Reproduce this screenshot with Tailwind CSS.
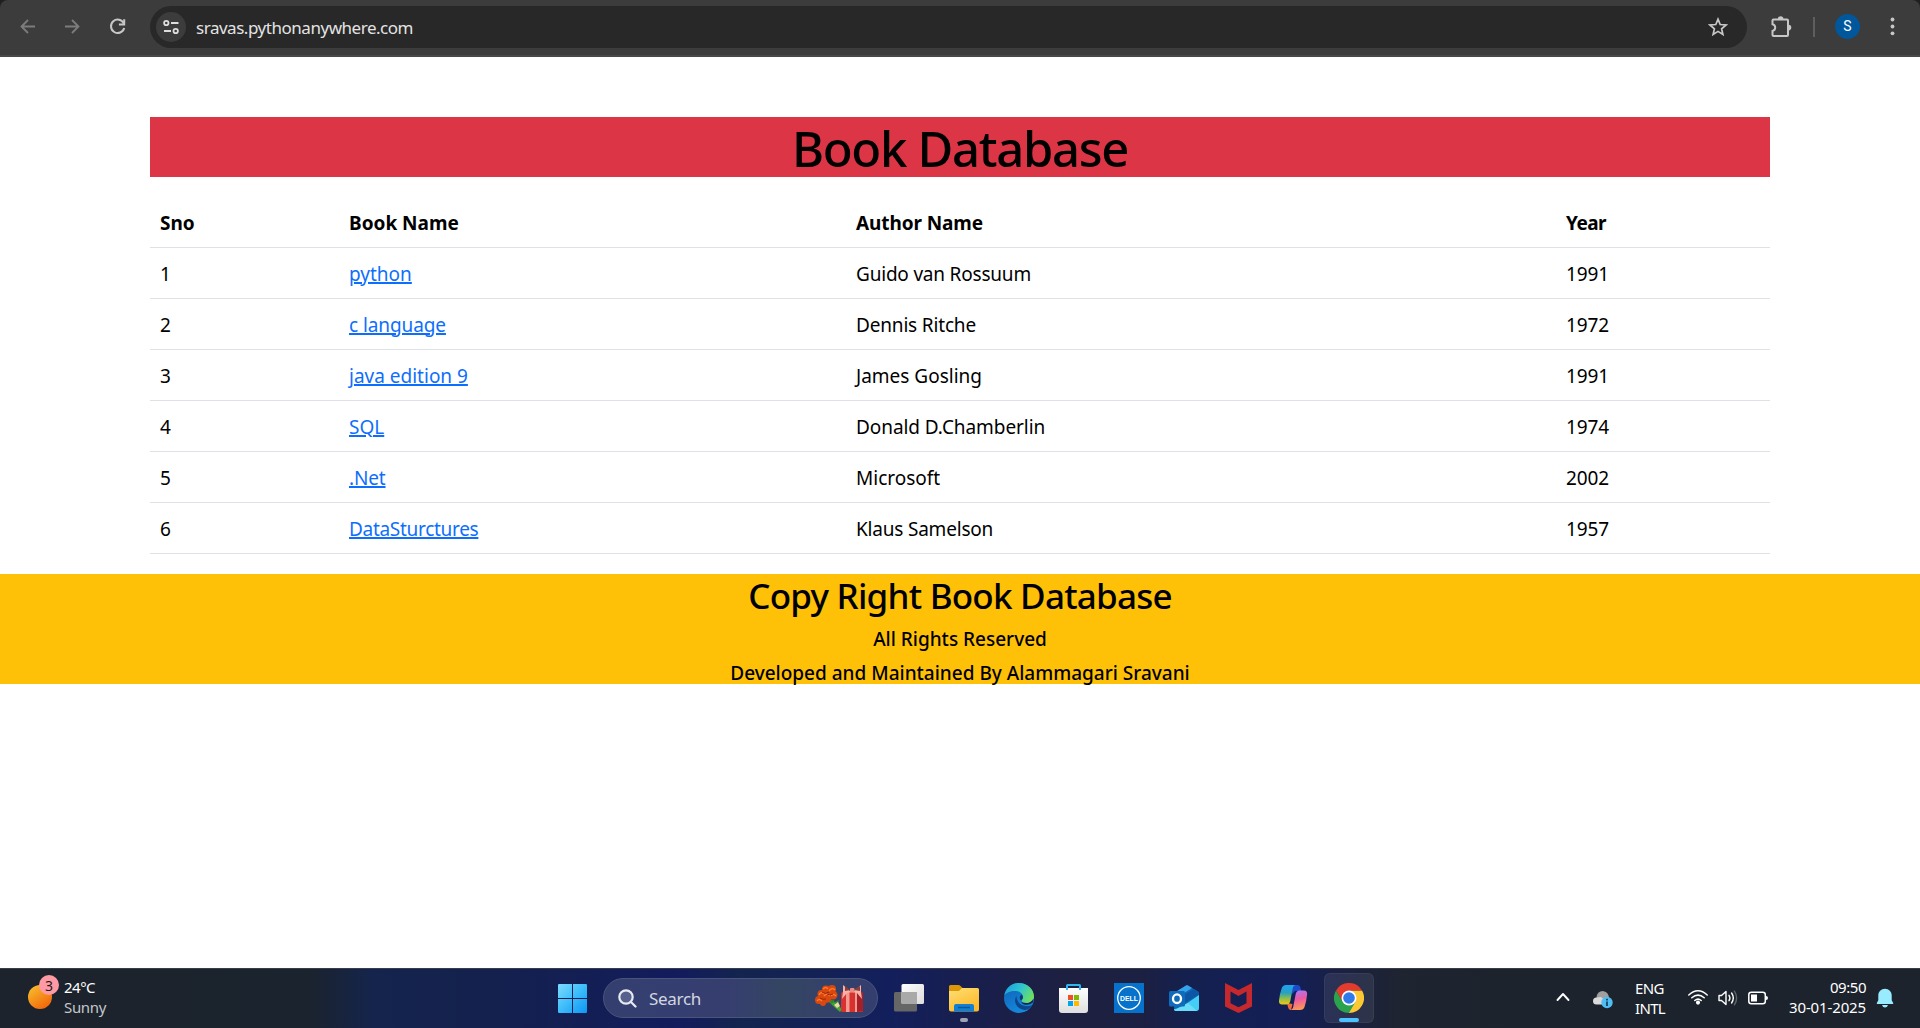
<!DOCTYPE html>
<html lang="en">
<head>
<meta charset="utf-8">
<title>Book Database</title>
<script src="https://cdn.jsdelivr.net/npm/@tailwindcss/browser@4"></script>
</head>
<body class="flex h-[1028px] w-[1920px] flex-col overflow-hidden bg-white font-['Noto_Sans','Open_Sans',sans-serif] text-black">

<!-- Browser toolbar -->
<div class="h-[57px] shrink-0 bg-[#1f1f1f]">
<header class="flex h-[57px] items-start rounded-t-lg border-b-2 border-[#484848] bg-[#3c3c3c]">
  <svg class="mt-[17px] ml-[18px] h-5 w-5 shrink-0" viewBox="0 0 20 20" fill="none" stroke="#7c7c7c" stroke-width="1.8"><path d="M17 9.5H3.5M10 3 3.5 9.5 10 16"/></svg>
  <svg class="mt-[17px] ml-[24px] h-5 w-5 shrink-0" viewBox="0 0 20 20" fill="none" stroke="#7c7c7c" stroke-width="1.8"><path d="M3 9.5h13.500M10 3l6.500 6.500L10 16"/></svg>
  <svg class="mt-[17px] ml-[26px] h-5 w-5 shrink-0" viewBox="0 0 20 20" fill="none" stroke="#c7c7c7" stroke-width="2"><path d="M15.800 6.500A6.700 6.700 0 1 0 16.200 11"/><path d="M16.200 2.200v5.300h-5.300"/></svg>
  <div class="mt-[6px] ml-[22px] flex h-[42px] w-[1597px] shrink-0 items-center rounded-full bg-[#282828] pl-[6px]">
    <span class="flex h-[30px] w-[30px] items-center justify-center rounded-full bg-[#3c3c3c]">
      <svg class="h-[18px] w-[18px]" viewBox="0 0 18 18" fill="none" stroke="#dedede" stroke-width="1.800"><circle cx="4.300" cy="5" r="2.200"/><path d="M9 5h7.500M2 13h7"/><circle cx="13.700" cy="13" r="2.200"/></svg>
    </span>
    <span class="ml-[10px] grow pt-[2px] text-[17px] leading-[26px] tracking-[-0.47px] text-[#e3e3e3]">sravas.pythonanywhere.com</span>
    <svg class="mr-[19px] h-5 w-5" viewBox="0 0 20 20" fill="none" stroke="#c7c7c7" stroke-width="1.700"><path d="m10 2.200 2.200 5.300 5.800.5-4.400 3.800 1.300 5.600-4.900-3-4.900 3 1.300-5.600L2 8l5.800-.5z"/></svg>
  </div>
  <svg class="mt-[15px] ml-[22px] h-[23px] w-[23px] shrink-0" viewBox="0 0 23 23"><path d="M4.500 4.500h13.500q1 0 1 1v14.500q0 1-1 1H4.500q-1 0-1-1V16c3.600-.8 3.600-6 0-6.800V5.500q0-1 1-1z" fill="none" stroke="#c7c7c7" stroke-width="2"/><path d="M8.800 4a2.800 2.800 0 0 1 5.600 0zM19.500 9.800a2.800 2.800 0 0 1 0 5.600z" fill="#c7c7c7"/></svg>
  <span class="mt-[17px] ml-[21px] h-5 w-[2px] shrink-0 bg-[#5e5e5e]"></span>
  <span class="mt-[14px] ml-[20px] flex h-[25px] w-[25px] shrink-0 items-center justify-center rounded-full bg-[#00579c] font-[Roboto,sans-serif] text-[14px] text-white">S</span>
  <svg class="mt-[16px] ml-[27px] h-5 w-[10px] shrink-0" viewBox="0 0 10 20" fill="#c7c7c7"><circle cx="5.500" cy="3.500" r="1.900"/><circle cx="5.500" cy="10.500" r="1.900"/><circle cx="5.500" cy="17.300" r="1.900"/></svg>
</header>
</div>

<!-- Page -->
<main class="grow">
  <div class="mx-[150px] pt-[60px]">
    <h1 class="h-[60px] bg-[#dc3545] pt-[2px] text-center text-[49px] leading-[59px] font-medium tracking-[-1.31px]">Book Database</h1>
    <table class="mt-[19px] w-full table-fixed border-collapse text-left text-[19px] leading-[47px]">
      <colgroup><col class="w-[189px]"><col class="w-[507px]"><col class="w-[710px]"><col></colgroup>
      <thead>
        <tr class="h-[51px] border-b border-[#dee2e6] leading-[45px]">
          <th class="p-0 pt-[5px] pl-[10px]">Sno</th><th class="p-0 pt-[5px] pl-[10px]">Book Name</th><th class="p-0 pt-[5px] pl-[10px] tracking-[-0.1px]">Author Name</th><th class="p-0 pt-[5px] pl-[10px] tracking-[-0.54px]">Year</th>
        </tr>
      </thead>
      <tbody>
        <tr class="h-[51px] border-b border-[#dee2e6]"><td class="p-0 pt-[3px] pl-[10px]">1</td><td class="p-0 pt-[3px] pl-[10px]"><a class="text-[#0d6efd] underline decoration-2 underline-offset-1">python</a></td><td class="p-0 pt-[3px] pl-[10px] tracking-[-0.2px]">Guido van Rossuum</td><td class="p-0 pt-[3px] pl-[10px] tracking-[-0.1px]">1991</td></tr>
        <tr class="h-[51px] border-b border-[#dee2e6]"><td class="p-0 pt-[3px] pl-[10px]">2</td><td class="p-0 pt-[3px] pl-[10px]"><a class="tracking-[-0.09px] text-[#0d6efd] underline decoration-2 underline-offset-1">c language</a></td><td class="p-0 pt-[3px] pl-[10px] tracking-[-0.17px]">Dennis Ritche</td><td class="p-0 pt-[3px] pl-[10px] tracking-[-0.1px]">1972</td></tr>
        <tr class="h-[51px] border-b border-[#dee2e6]"><td class="p-0 pt-[3px] pl-[10px]">3</td><td class="p-0 pt-[3px] pl-[10px]"><a class="text-[#0d6efd] underline decoration-2 underline-offset-1">java edition 9</a></td><td class="p-0 pt-[3px] pl-[10px]">James Gosling</td><td class="p-0 pt-[3px] pl-[10px] tracking-[-0.1px]">1991</td></tr>
        <tr class="h-[51px] border-b border-[#dee2e6]"><td class="p-0 pt-[3px] pl-[10px]">4</td><td class="p-0 pt-[3px] pl-[10px]"><a class="text-[#0d6efd] underline decoration-2 underline-offset-1">SQL</a></td><td class="p-0 pt-[3px] pl-[10px] tracking-[-0.07px]">Donald D.Chamberlin</td><td class="p-0 pt-[3px] pl-[10px] tracking-[-0.1px]">1974</td></tr>
        <tr class="h-[51px] border-b border-[#dee2e6]"><td class="p-0 pt-[3px] pl-[10px]">5</td><td class="p-0 pt-[3px] pl-[10px]"><a class="tracking-[-0.15px] text-[#0d6efd] underline decoration-2 underline-offset-1">.Net</a></td><td class="p-0 pt-[3px] pl-[10px]">Microsoft</td><td class="p-0 pt-[3px] pl-[10px] tracking-[-0.1px]">2002</td></tr>
        <tr class="h-[51px] border-b border-[#dee2e6]"><td class="p-0 pt-[3px] pl-[10px]">6</td><td class="p-0 pt-[3px] pl-[10px]"><a class="tracking-[-0.3px] text-[#0d6efd] underline decoration-2 underline-offset-1">DataSturctures</a></td><td class="p-0 pt-[3px] pl-[10px] tracking-[-0.2px]">Klaus Samelson</td><td class="p-0 pt-[3px] pl-[10px] tracking-[-0.1px]">1957</td></tr>
      </tbody>
    </table>
  </div>
  <footer class="mt-5 h-[110px] bg-[#ffc107] text-center font-medium">
    <h2 class="text-[35px] leading-[43px] tracking-[-0.77px]">Copy Right Book Database</h2>
    <h6 class="mt-[10px] text-[19px] leading-6">All Rights Reserved</h6>
    <h6 class="mt-[10px] text-[19px] leading-6">Developed and Maintained By Alammagari Sravani</h6>
  </footer>
</main>

<!-- Taskbar -->
<nav class="flex h-[60px] shrink-0 items-start border-t border-[#383d4c] bg-[linear-gradient(90deg,#1c232c_0px,#1b232e_310px,#14244d_375px,#14204e_500px,#131c5c_680px,#13244f_740px,#131f5c_890px,#191f4c_980px,#1d2040_1070px,#1c2042_1140px,#14204f_1190px,#131f56_1290px,#1b2140_1350px,#1e2430_1400px,#1c232c_1540px)] text-white">
  <div class="relative ml-[28px] flex w-[530px] shrink-0 pt-[8px]">
    <svg class="mt-[8px] h-6 w-6" viewBox="0 0 24 24"><defs><linearGradient id="sun" x1="0" y1="0" x2=".7" y2="1"><stop stop-color="#f8c530"/><stop offset="1" stop-color="#f2660b"/></linearGradient></defs><circle cx="12" cy="12" r="12" fill="url(#sun)"/></svg>
    <span class="absolute top-[6px] left-[11px] flex h-5 w-5 items-center justify-center rounded-full bg-[#ff99a4] text-[14px] text-[#1b1b1b]">3</span>
    <div class="ml-[12px] text-[15px] leading-5"><p class="tracking-[-0.5px]">24°C</p><p class="tracking-[-0.34px] text-[#c4c7ca]">Sunny</p></div>
  </div>

  <svg class="mt-[15px] h-[29px] w-[29px] shrink-0" viewBox="0 0 29 29"><defs><linearGradient id="win" x1="0" y1="0" x2="1" y2="1"><stop stop-color="#7ddcff"/><stop offset=".5" stop-color="#3cbcfa"/><stop offset="1" stop-color="#0d96f5"/></linearGradient></defs><path fill="url(#win)" d="M1 0h13v14H0V1q0-1 1-1zM15 0h13q1 0 1 1v13H15zM0 15h14v14H1q-1 0-1-1zM15 15h14v13q0 1-1 1H15z"/></svg>

  <div class="mt-[9px] ml-[16px] flex h-10 w-[275px] shrink-0 items-center rounded-full border border-[#4b5579] bg-[linear-gradient(90deg,#343f70,#363e70_45%,#344562_65%,#343e70)] pl-[14px]">
    <svg class="h-[19px] w-[19px]" viewBox="0 0 19 19" fill="none" stroke="#e8eaf2" stroke-width="2.200" stroke-linecap="round"><circle cx="8" cy="8" r="6.700" fill="#55618c"/><path d="m13 13 4.500 4.500"/></svg>
    <span class="ml-[12px] grow pt-[2px] text-[17px] leading-6 tracking-[-0.3px] text-[#d3d6e0]">Search</span>
    <svg class="mr-[13px] h-[29px] w-[50px]" viewBox="0 0 50 29">
      <path d="M17 16q6 3 11 9l-2 3q-6-5-11-10z" fill="#43a833"/><path d="m17 20 8-4-1 5zM14 17l8 6-2-7z" fill="#2c8b2f"/><path d="m20 21 4-3 2 4-3 2z" fill="#ead9a4"/>
      <g fill="#d9480f"><circle cx="12" cy="5.500" r="4"/><circle cx="18" cy="5" r="4"/><circle cx="7.500" cy="10" r="4"/><circle cx="19" cy="11" r="4.500"/><circle cx="12.500" cy="14" r="5"/><circle cx="5" cy="16" r="4"/><circle cx="9" cy="19" r="3"/></g>
      <g fill="none" stroke="#ff7a2f" stroke-width="1.300"><path d="M9 5q3-3 5 0M15 7q3-4 6-1M5 11q2-4 5-1M10 12q3-4 6 0M3 17q2-3 5 0M17 12q2-3 5 0"/></g>
      <g fill="none" stroke="#9c2408"><path d="M8 8q3 3 7 0M13 10q3 2 6 0M6 14q3 2 6 1"/></g>
      <rect x="27" y="8" width="22" height="20" rx="1.500" fill="#d7322f"/><path d="M43 8h6v19l-6 1z" fill="#a91f28"/><path d="M32 8h3.500v20H32zM41 8h2v20h-2z" fill="#f59a90"/>
      <path d="M36 7 29 1v7l-1 7 5-6 5-1 5 1 5 6-1-7V1l-7 6z" fill="#f7b2a6"/><path d="m36 6-5-4v5zM40 6l6-4v5z" fill="#8d3b35"/><rect x="36" y="4" width="4.500" height="4.500" rx="1" fill="#e88d82"/>
    </svg>
  </div>

  <div class="ml-[16px] flex shrink-0 gap-[25px] pt-[14px]">
    <!-- Task view -->
    <svg class="h-[30px] w-[30px]" viewBox="0 0 30 30"><defs><linearGradient id="tv" x1="0" y1="0" x2="1" y2="1"><stop stop-color="#fff"/><stop offset="1" stop-color="#dcdcdc"/></linearGradient></defs><rect y="9" width="23" height="19.500" rx="1.500" fill="#666"/><rect x="7.500" y="1" width="22.500" height="20" rx="1.500" fill="url(#tv)"/><path d="M7.500 9H23v12H9q-1.500 0-1.500-1.500z" fill="#a9a9a9"/></svg>
    <!-- File explorer -->
    <div class="relative"><svg class="h-[30px] w-[30px]" viewBox="0 0 30 30"><defs><linearGradient id="fd" x1="0" y1="0" x2=".6" y2="1"><stop stop-color="#ffdf74"/><stop offset="1" stop-color="#fcba2b"/></linearGradient></defs><path d="M0 8V3.500Q0 2 1.500 2h8q1 0 2 1L13.500 5H20v5H0z" fill="#dc9708"/><path d="M0 8h10l3-3h15.500Q30 5 30 6.500v20q0 2-2 2H2q-2 0-2-2z" fill="url(#fd)"/><path d="M5 28.500V23q0-2 2-2h16q2 0 2 2v5.500z" fill="#1180d4"/><path d="M9 24.500h12" stroke="#0a559b" stroke-width="1.500"/></svg>
      <span class="absolute top-[35px] left-[11px] h-1 w-2 rounded-full bg-[#9fa3b8]"></span></div>
    <!-- Edge -->
    <svg class="h-[30px] w-[30px]" viewBox="0 0 30 30"><defs><linearGradient id="e1" x1="0" y1=".2" x2="1" y2=".6"><stop stop-color="#1c9fe0"/><stop offset=".5" stop-color="#2fc4d0"/><stop offset="1" stop-color="#6fe05c"/></linearGradient><linearGradient id="e2" x1="0" y1="0" x2=".5" y2="1"><stop stop-color="#0f5fb5"/><stop offset="1" stop-color="#1489dc"/></linearGradient></defs><circle cx="15" cy="15" r="15" fill="url(#e2)"/><path d="M.3 12.500C1.600 5 7.500 0 15 0c9 0 15 6.500 15 13.500 0 4-3 6.500-7 6.500-3.500 0-5.500-1.200-5.500-2.400 0-.8 1.500-1.400 1.500-3.600C19 10.500 15.500 8 11 8 6 8 2 10 .3 12.500z" fill="url(#e1)"/><path d="M12.500 13C9 18 12 26 20.500 27c3 .3 6-2 7.800-5.200-3 1.700-6 2-9 .8-4.500-1.600-6.800-5.600-6.800-9.600z" fill="#0d4689"/><path d="M29 19.500q-3.500 3-8 2.200-3-.6-4-3.200 2 1.800 6 1.500 4-.2 6.500-4.500z" fill="#17265a"/><path d="M19 14c0 2-1.500 2.800-1.500 3.600-1.800-.5-2.500-3.500-.3-6.100q1.800 1 1.800 2.500z" fill="#15376b"/></svg>
    <!-- Store -->
    <svg class="h-[30px] w-[30px]" viewBox="0 0 30 30"><defs><linearGradient id="st" x1="0" y1="0" x2="0" y2="1"><stop stop-color="#fff"/><stop offset="1" stop-color="#dedede"/></linearGradient></defs><path d="M0 5h29v22q0 3-3 3H3q-3 0-3-3z" fill="url(#st)"/><path d="M8 7V2.500Q8 2 8.500 2h12q.5 0 .5.500V7" fill="none" stroke="#2fb6ea" stroke-width="2"/><path fill="#f25022" d="M9 12h5v5H9z"/><path fill="#7fba00" d="M15 12h5v5h-5z"/><path fill="#00a4ef" d="M9 18h5v5H9z"/><path fill="#ffb900" d="M15 18h5v5h-5z"/></svg>
    <!-- Dell -->
    <svg class="h-[30px] w-[30px]" viewBox="0 0 30 30"><path fill="#0672cb" d="M0 0h30v30H0z"/><circle cx="15" cy="15" r="11.300" fill="none" stroke="#fff" stroke-width="1.300"/><text x="15" y="18" text-anchor="middle" textLength="18" lengthAdjust="spacingAndGlyphs" font-family="Liberation Sans, sans-serif" font-weight="700" font-size="8" fill="#fff">DELL</text></svg>
    <!-- Outlook -->
    <svg class="h-[30px] w-[30px]" viewBox="0 0 30 30"><path d="m5 10 12-7.500q1-.5 2 0l10 6q1 .7 1 2V25q0 3-3 3H8q-3 0-3-3z" fill="#1267b4"/><path d="m5 10 12-7.500q1-.5 2 0l4 2.600L9 14H5z" fill="#35a3ea"/><path d="m10 15 15-9 4 2.500q1 .7 1 2v1L14 21z" fill="#0b56a5"/><path d="M30 12v13q0 3-3 3H8q-3 0-3-2 8 0 12-5z" fill="#44cdf5"/><path d="m5 27 14-7 9 7.800q-.5.2-1 .2H8q-2 0-3-1z" fill="#68dcf8"/><rect y="8" width="16" height="15.500" rx="1.500" fill="#0f6cbd"/><ellipse cx="8" cy="15.700" rx="4" ry="4.300" fill="none" stroke="#fff" stroke-width="2.300"/></svg>
    <!-- McAfee -->
    <svg class="h-[30px] w-[30px]" viewBox="0 0 30 30"><path d="m1 0 13.500 7L28 0v23.500L14.500 30 1 23.500zM6.500 8.500v11.800l8 4 8-4V8.500l-8 4.500z" fill="#c5282d" fill-rule="evenodd"/></svg>
    <!-- Copilot -->
    <svg class="h-[30px] w-[30px]" viewBox="0 0 30 30"><defs><linearGradient id="c1" x1="0" y1="0" x2="0" y2="1"><stop stop-color="#1ba5f5"/><stop offset=".4" stop-color="#2a9fc0"/><stop offset=".7" stop-color="#8fc04a"/><stop offset="1" stop-color="#f2c811"/></linearGradient><linearGradient id="c2" x1=".3" y1="0" x2=".5" y2="1"><stop stop-color="#a87bf5"/><stop offset=".45" stop-color="#ea58a6"/><stop offset="1" stop-color="#ff9a52"/></linearGradient></defs><path d="M12 2h6.500q2.500 0 3 3l.8 3H16l-3 3z" fill="#1a4bc9"/><path d="m8 20 5.500 1-1.500 6q-2.500 0-3-3z" fill="#f06a3c"/><path d="M7 2h10q-2.500 0-3.200 3l-2.500 13q-.8 3.500-4 3.500H3Q-.3 21.500 0 17.500.6 11 2.800 5 4 2 7 2z" fill="url(#c1)"/><path d="M20.500 7.500h4.500q3.400 0 3.100 4-.5 6-2.600 12.500-1 3-4.500 3H10.500q3 0 3.700-3l2.500-13q.8-3.500 3.800-3.500z" fill="url(#c2)"/></svg>
    <!-- Chrome -->
    <div class="relative"><span class="absolute -top-[10px] -left-[10px] h-[50px] w-[50px] rounded-md border border-white/5 bg-white/8"></span>
      <svg class="relative h-[30px] w-[30px]" viewBox="0 0 30 30"><path d="M15 15 15 30A15 15 0 0 0 28 7.500H15z" fill="#fcc934"/><path d="M15 7.500H28A15 15 0 0 0 2 7.500l6.500 11.200z" fill="#e33b2e"/><path d="M8.500 18.700 2 7.500A15 15 0 0 0 15 30l6.500-11.300z" fill="#2ba24c"/><circle cx="15" cy="15" r="7.500" fill="#fff"/><circle cx="15" cy="15" r="5.800" fill="#3079e8"/></svg>
      <span class="absolute top-[35px] left-[5px] h-1 w-5 rounded-full bg-[#4cc2ff]"></span></div>
  </div>

  <!-- System tray -->
  <svg class="mt-[22px] ml-[192px] h-3 w-[14px] shrink-0" viewBox="0 0 14 12" fill="none" stroke="#fff" stroke-width="1.900" stroke-linecap="round" stroke-linejoin="round"><path d="m1.500 9 5.500-6 5.500 6"/></svg>
  <svg class="mt-[21px] ml-[22px] h-[20px] w-[22px] shrink-0" viewBox="0 0 22 20"><circle cx="10.500" cy="7" r="6" fill="#8c8c8c"/><path d="M4.500 7.500q3.500-3 7 0l4 3v4H4.500a3.500 3.500 0 0 1 0-7z" fill="#dadada"/><path d="M10.500 1.500q6 0 6.500 6.500l-3 3-5-4-4 .5q.5-6 5.500-6z" fill="#a0a0a0"/><circle cx="15" cy="12.500" r="5.700" fill="#50bdf5"/><path d="M15 11.500V16M15 8.800v1.600" stroke="#12344a" stroke-width="1.600"/></svg>
  <div class="mt-[9px] ml-[21px] w-[53px] shrink-0 text-[15px] leading-5"><p class="tracking-[-0.56px]">ENG</p><p class="tracking-[-0.67px]">INTL</p></div>
  <svg class="mt-[20px] h-[16px] w-5 shrink-0" viewBox="0 0 20 16" fill="none" stroke="#fff" stroke-width="1.500" stroke-linecap="round"><path d="M.8 6q9.200-8.500 18.400 0M3.800 8.800q6.200-5.400 12.400 0M6.800 11.500q3.200-2.700 6.400 0"/><circle cx="10" cy="13.600" r="1.300" fill="#fff"/></svg>
  <svg class="mt-[20px] ml-[10px] h-[18px] w-5 shrink-0" viewBox="0 0 20 18" fill="none" stroke="#fff" stroke-width="1.400" stroke-linecap="round" stroke-linejoin="round"><path d="M1 6.500h2.500L8 2.500v13L3.500 11.500H1zM11 6.300q1.800 2.700 0 5.400M13.600 4q3.400 5 0 10"/><path d="M16.400 2.200q4.400 6.800 0 13.600" stroke="#60656d"/></svg>
  <svg class="mt-[22px] ml-[10px] h-[15px] w-5 shrink-0" viewBox="0 0 20 15"><rect x=".8" y="1.300" width="16.500" height="11.500" rx="2.500" fill="none" stroke="#fff" stroke-width="1.500"/><path d="M3 3.500h6v7H3zM18 5q2 0 2 2t-2 2z" fill="#fff"/></svg>
  <div class="mt-[8px] w-[98px] shrink-0 text-right text-[15px] leading-5"><p class="tracking-[-0.47px]">09:50</p><p class="tracking-[-0.13px]">30-01-2025</p></div>
  <svg class="mt-[19px] ml-[10px] h-5 w-[18px] shrink-0" viewBox="0 0 18 20" fill="#99ebff"><path d="M9 .8c3.900 0 6.700 3 6.700 6.700v4.800l1.500 2.600q.5 1.100-.7 1.100H1.500q-1.200 0-.7-1.100l1.500-2.600V7.500C2.300 3.800 5.100.8 9 .8zM6 17h6q-.8 2.500-3 2.500T6 17z"/></svg>
</nav>
</body>
</html>
